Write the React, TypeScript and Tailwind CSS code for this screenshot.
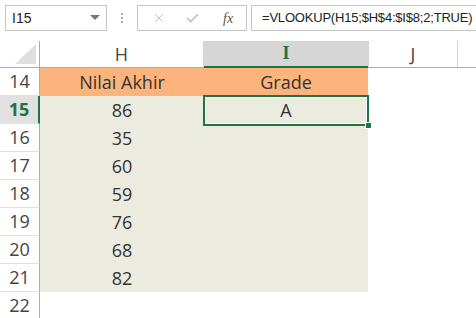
import { X, Check } from "lucide-react";

const rows = [
  { n: 14, h: "Nilai Akhir", i: "Grade", head: true },
  { n: 15, h: "86", i: "A" },
  { n: 16, h: "35", i: "" },
  { n: 17, h: "60", i: "" },
  { n: 18, h: "59", i: "" },
  { n: 19, h: "76", i: "" },
  { n: 20, h: "68", i: "" },
  { n: 21, h: "82", i: "" },
  { n: 22, h: "", i: "", empty: true },
];

const App = () => {
  return (
    <div className="w-[476px] h-[318px] bg-white overflow-hidden font-['Open_Sans',sans-serif] text-[#333]">
      {/* formula bar */}
      <div className="h-[41px] flex items-start pt-[5px] pl-[5px]">
        <div className="w-[102px] h-[26px] border border-[#c6c6c6] flex items-center justify-between pl-[6px] pr-[6px] font-['Liberation_Sans',sans-serif] text-[14px] text-[#222]">
          <span>I15</span>
          <span className="w-0 h-0 border-l-[5px] border-r-[5px] border-t-[5px] border-l-transparent border-r-transparent border-t-[#777] mb-[2px]" />
        </div>
        <div className="w-[30px] h-[26px] flex flex-col items-center justify-center gap-[2px]">
          <span className="w-[2px] h-[2px] bg-[#aaa]" />
          <span className="w-[2px] h-[2px] bg-[#aaa]" />
          <span className="w-[2px] h-[2px] bg-[#aaa]" />
        </div>
        <div className="w-[110px] h-[26px] border border-[#c6c6c6] flex items-center pl-[14px]">
          <X size={14} strokeWidth={1.5} className="text-[#bdbdbd]" />
          <Check size={15} strokeWidth={2.5} className="text-[#bdbdbd] ml-[19px]" />
          <span className="ml-[23px] font-['Liberation_Serif',serif] italic text-[14px] text-[#555]">fx</span>
        </div>
        <div className="flex-1 ml-[4px] h-[26px] border border-r-0 border-[#c6c6c6] flex items-center pl-[10px] font-['Liberation_Sans',sans-serif] text-[13px] tracking-[-0.2px] text-[#222] whitespace-nowrap overflow-hidden">
          =VLOOKUP(H15;$H$4:$I$8;2;TRUE)
        </div>
      </div>

      {/* column headers */}
      <div className="h-[27px] flex border-b border-[#ababab] text-[18px] text-[#444]">
        <div className="w-[40px] border-r border-[#ababab] relative">
          <svg className="absolute right-[3px] bottom-[3px]" width="21" height="20" viewBox="0 0 21 20">
            <polygon points="21,0 21,20 0,20" fill="#dfdfdf" />
          </svg>
        </div>
        <div className="w-[164px] border-r border-[#d4d4d4] flex items-center justify-center">H</div>
        <div className="w-[164px] bg-[#d6d6d6] border-b-[2px] border-[#217346] -mb-px flex items-center justify-center font-['Liberation_Serif',serif] font-bold text-[#217346]">
          I
        </div>
        <div className="w-[90px] border-l border-r border-[#d4d4d4] flex items-center justify-center">J</div>
        <div className="flex-1" />
      </div>

      {/* rows */}
      {rows.map((r) => {
        const sel = r.n === 15;
        return (
          <div key={r.n} className={`h-[28px] flex text-[18px] ${sel ? "relative z-10" : ""}`}>
            <div
              className={`w-[40px] border-b border-[#e1e1e1] flex items-center justify-center ${
                sel
                  ? "bg-[#e1e1e1] border-r-[2px] border-r-[#217346] font-bold text-[#217346]"
                  : "border-r border-r-[#ababab] text-[#444]"
              }`}
            >
              {r.n}
            </div>
            <div
              className={`w-[164px] flex items-center justify-center ${
                r.empty ? "" : r.head ? "bg-[#fdb47c]" : "bg-[#ecebe0]"
              }`}
            >
              {r.h}
            </div>
            <div
              className={`w-[164px] relative flex items-center justify-center ${
                r.empty ? "" : r.head ? "bg-[#fdb47c]" : "bg-[#ecebe0]"
              }`}
            >
              {r.i}
              {sel && (
                <>
                  <div className="absolute left-[-1px] top-[-1px] right-[-1px] bottom-[-2px] border-[2px] border-[#217346]">
                    <div className="w-full h-full border border-white" />
                  </div>
                  <div className="absolute right-[-4px] bottom-[-5px] w-[7px] h-[7px] bg-[#217346] border border-white" />
                </>
              )}
            </div>
            <div className="flex-1" />
          </div>
        );
      })}
    </div>
  );
};

export default App;
